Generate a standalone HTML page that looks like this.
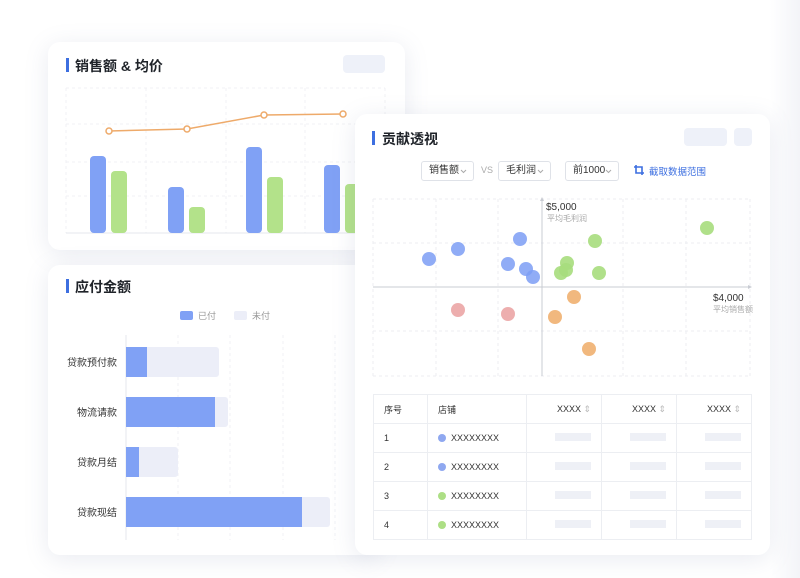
<!DOCTYPE html>
<html><head><meta charset="utf-8"><style>
*{margin:0;padding:0;box-sizing:border-box}
body{width:800px;height:578px;background:#fff;position:relative;overflow:hidden;font-family:"Liberation Sans","Noto Sans CJK SC",sans-serif;color:#1f2329}
.card{position:absolute;background:#fff;border-radius:12px;box-shadow:0 4px 24px rgba(120,130,170,.16)}
.t{position:absolute;font-size:14px;font-weight:bold;color:#1f2329}
.acc{position:absolute;width:3px;height:14px;background:#3d6fe0}
.ph{position:absolute;background:#eef1f9;border-radius:4px}
.a{position:absolute}
.sel{position:absolute;height:20px;border:1px solid #dfe2e8;border-radius:3px;font-size:10px;line-height:18px;padding-left:7px;color:#333}
.sel svg{position:absolute;right:6px;top:7px}
table{border-collapse:collapse;font-size:9px;color:#333}
td{border:1px solid #eceef2;height:29px;padding:0 10px}
.bar{display:inline-block;width:36px;height:8px;background:#eef0f6}
.dot{display:inline-block;width:8px;height:8px;border-radius:50%;margin-right:5px;vertical-align:-1px}
.s{color:#bbb}
</style></head><body>
<div style="position:absolute;left:770px;top:0;width:30px;height:578px;background:linear-gradient(90deg,#fff,#f3f4f8)"></div>

<div class="card" style="left:48px;top:42px;width:357px;height:208px"></div>
<div class="acc" style="left:66px;top:58px"></div>
<div class="t" style="left:75px;top:56px">销售额 &amp; 均价</div>
<div class="ph" style="left:343px;top:55px;width:42px;height:18px"></div>
<svg class="a" style="left:0;top:0" width="420" height="260">
<g stroke="#f0f1f4" stroke-dasharray="3 3" fill="none">
<path d="M66 88H385M66 124H385M66 162H385M66 196H385M146 88V233M226 88V233M305 88V233M385 88V233M66 88V233"/></g>
<path d="M66 233H385" stroke="#e5e7ec"/>
<g fill="#80a1f5"><rect x="90" y="156" width="16" height="77" rx="4"/><rect x="168" y="187" width="16" height="46" rx="4"/><rect x="246" y="147" width="16" height="86" rx="4"/><rect x="324" y="165" width="16" height="68" rx="4"/></g>
<g fill="#b3e28a"><rect x="111" y="171" width="16" height="62" rx="4"/><rect x="189" y="207" width="16" height="26" rx="4"/><rect x="267" y="177" width="16" height="56" rx="4"/><rect x="345" y="184" width="16" height="49" rx="4"/></g>
<polyline points="109,131 187,129 264,115 343,114" fill="none" stroke="#eeaa6a" stroke-width="1.5"/>
<g fill="#fff" stroke="#eeaa6a" stroke-width="1.5"><circle cx="109" cy="131" r="3"/><circle cx="187" cy="129" r="3"/><circle cx="264" cy="115" r="3"/><circle cx="343" cy="114" r="3"/></g>
</svg>

<div class="card" style="left:48px;top:265px;width:330px;height:290px"></div>
<div class="acc" style="left:66px;top:279px"></div>
<div class="t" style="left:75px;top:277px">应付金额</div>
<div class="a" style="left:180px;top:311px;width:13px;height:9px;background:#80a1f5;border-radius:2px"></div>
<div class="a" style="left:198px;top:309px;font-size:9px;color:#999">已付</div>
<div class="a" style="left:234px;top:311px;width:13px;height:9px;background:#eceef8;border-radius:2px"></div>
<div class="a" style="left:252px;top:309px;font-size:9px;color:#999">未付</div>
<svg class="a" style="left:0;top:0" width="380" height="560">
<g stroke="#f0f1f4" stroke-dasharray="3 3"><path d="M178 335V540M230 335V540M283 335V540M335 335V540"/></g>
<path d="M126 335V540" stroke="#e5e7ec"/>
<g fill="#eceef8"><rect x="126" y="347" width="93" height="30" rx="3"/><rect x="126" y="397" width="102" height="30" rx="3"/><rect x="126" y="447" width="52" height="30" rx="3"/><rect x="126" y="497" width="204" height="30" rx="3"/></g>
<g fill="#80a1f5"><rect x="126" y="347" width="21" height="30"/><rect x="126" y="397" width="89" height="30"/><rect x="126" y="447" width="13" height="30"/><rect x="126" y="497" width="176" height="30"/></g>
<g font-size="10" fill="#333" text-anchor="end" font-family="Liberation Sans,Noto Sans CJK SC,sans-serif"><text x="117" y="366">贷款预付款</text><text x="117" y="416">物流请款</text><text x="117" y="466">贷款月结</text><text x="117" y="516">贷款现结</text></g>
</svg>

<div class="card" style="left:355px;top:114px;width:415px;height:441px"></div>
<div class="acc" style="left:372px;top:131px"></div>
<div class="t" style="left:382px;top:129px">贡献透视</div>
<div class="ph" style="left:684px;top:128px;width:43px;height:18px"></div>
<div class="ph" style="left:734px;top:128px;width:18px;height:18px"></div>
<div class="sel" style="left:421px;top:161px;width:53px">销售额<svg width="7" height="5"><path d="M1 1L3.5 3.5L6 1" fill="none" stroke="#aaa"/></svg></div>
<div class="a" style="left:481px;top:165px;font-size:9px;color:#aaa">VS</div>
<div class="sel" style="left:498px;top:161px;width:53px">毛利润<svg width="7" height="5"><path d="M1 1L3.5 3.5L6 1" fill="none" stroke="#aaa"/></svg></div>
<div class="sel" style="left:565px;top:161px;width:54px">前1000<svg width="7" height="5"><path d="M1 1L3.5 3.5L6 1" fill="none" stroke="#aaa"/></svg></div>
<svg class="a" style="left:633px;top:164px" width="12" height="12"><path d="M3 1V9H11M1 3H9V11" fill="none" stroke="#3d6fe0" stroke-width="1.6"/></svg>
<div class="a" style="left:649px;top:164px;font-size:9.5px;color:#3d6fe0">截取数据范围</div>
<svg class="a" style="left:0;top:0" width="800" height="400">
<g stroke="#eceef2" stroke-dasharray="3 3" fill="none"><path d="M373 199H750M373 243H750M373 331H750M373 376H750M373 199V376M436 199V376M498 199V376M623 199V376M686 199V376M750 199V376"/></g>
<path d="M373 287H748M542 201V376" stroke="#c9ccd3"/>
<path d="M748 285L752 287L748 289ZM540 201L542 197L544 201Z" fill="#c9ccd3"/>
<g fill="#7c9ef4" fill-opacity=".85"><circle cx="429" cy="259" r="7"/><circle cx="458" cy="249" r="7"/><circle cx="520" cy="239" r="7"/><circle cx="508" cy="264" r="7"/><circle cx="526" cy="269" r="7"/><circle cx="533" cy="277" r="7"/></g>
<g fill="#a7dd7d" fill-opacity=".9"><circle cx="595" cy="241" r="7"/><circle cx="567" cy="263" r="7"/><circle cx="566" cy="270" r="7"/><circle cx="561" cy="273" r="7"/><circle cx="599" cy="273" r="7"/><circle cx="707" cy="228" r="7"/></g>
<g fill="#eaa0a0" fill-opacity=".85"><circle cx="458" cy="310" r="7"/><circle cx="508" cy="314" r="7"/></g>
<g fill="#efb070" fill-opacity=".9"><circle cx="574" cy="297" r="7"/><circle cx="555" cy="317" r="7"/><circle cx="589" cy="349" r="7"/></g>
<g font-family="Liberation Sans,Noto Sans CJK SC,sans-serif"><text x="546" y="210" font-size="10" fill="#333">$5,000</text><text x="547" y="221" font-size="8" fill="#aaa">平均毛利润</text><text x="713" y="301" font-size="10" fill="#333">$4,000</text><text x="713" y="312" font-size="8" fill="#aaa">平均销售额</text></g>
</svg>
<table class="a" style="left:373px;top:394px;width:379px">
<tr><td style="width:54px;height:27px">序号</td><td style="width:99px">店铺</td><td style="width:75px;text-align:right">XXXX <span class="s">⇕</span></td><td style="width:75px;text-align:right">XXXX <span class="s">⇕</span></td><td style="text-align:right">XXXX <span class="s">⇕</span></td></tr>
<tr><td>1</td><td><span class="dot" style="background:#8fa8f0"></span>XXXXXXXX</td><td style="text-align:right"><span class="bar"></span></td><td style="text-align:right"><span class="bar"></span></td><td style="text-align:right"><span class="bar"></span></td></tr>
<tr><td>2</td><td><span class="dot" style="background:#8fa8f0"></span>XXXXXXXX</td><td style="text-align:right"><span class="bar"></span></td><td style="text-align:right"><span class="bar"></span></td><td style="text-align:right"><span class="bar"></span></td></tr>
<tr><td>3</td><td><span class="dot" style="background:#addf85"></span>XXXXXXXX</td><td style="text-align:right"><span class="bar"></span></td><td style="text-align:right"><span class="bar"></span></td><td style="text-align:right"><span class="bar"></span></td></tr>
<tr><td>4</td><td><span class="dot" style="background:#addf85"></span>XXXXXXXX</td><td style="text-align:right"><span class="bar"></span></td><td style="text-align:right"><span class="bar"></span></td><td style="text-align:right"><span class="bar"></span></td></tr>
</table>
</body></html>
